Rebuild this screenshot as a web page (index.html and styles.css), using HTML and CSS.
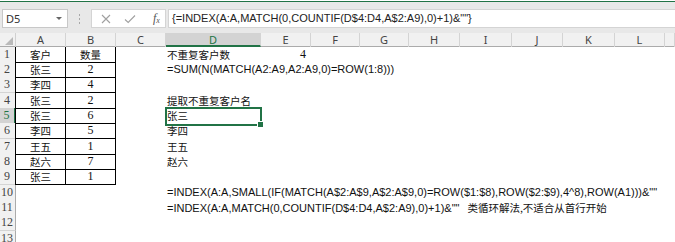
FILE: index.html
```html
<!DOCTYPE html>
<html lang="zh-CN">
<head>
<meta charset="utf-8">
<title>Excel</title>
<link rel="stylesheet" href="styles.css">
</head>
<body>
<div class="app">
  <div class="ribbon-edge"></div>
  <div class="fbar">
    <div class="namebox"><span class="nb-text">D5</span><span class="nb-arrow"></span></div>
    <div class="sep"><i></i><i></i><i></i></div>
    <div class="btns">
      <svg class="ico" width="10" height="10" viewBox="0 0 10 10"><path d="M1 1L9 9M9 1L1 9" stroke="#a0a0a0" stroke-width="1.1" fill="none"/></svg>
      <svg class="ico" width="12" height="10" viewBox="0 0 12 10"><path d="M1 5.5L4.2 8.5L11 1.5" stroke="#a0a0a0" stroke-width="1.1" fill="none"/></svg>
      <span class="fx">f<sub>x</sub></span>
    </div>
    <div class="finput">{=INDEX(A:A,MATCH(0,COUNTIF(D$4:D4,A$2:A9),0)+1)&amp;""}</div>
  </div>
  <div class="gap"></div>
  <div class="sheet">
    <div class="row hdr">
      <div class="corner"><span class="tri"></span></div>
      <div class="ch">A</div><div class="ch">B</div><div class="ch">C</div><div class="ch sel">D</div><div class="ch">E</div><div class="ch">F</div><div class="ch">G</div><div class="ch">H</div><div class="ch">I</div><div class="ch">J</div><div class="ch">K</div><div class="ch">L</div><div class="ch last"></div>
    </div>

    <div class="row r15">
      <div class="rh">1</div><div class="c t tl">客户</div><div class="c t">数量</div><div class="c"></div>
      <div class="c d cn">不重复客户数</div><div class="c num-r">4</div>
    </div>
    <div class="row r15">
      <div class="rh">2</div><div class="c t tl">张三</div><div class="c t n">2</div><div class="c"></div>
      <div class="c d fm">=SUM(N(MATCH(A2:A9,A2:A9,0)=ROW(1:8)))</div>
    </div>
    <div class="row r16">
      <div class="rh">3</div><div class="c t tl">李四</div><div class="c t n">4</div><div class="c"></div>
      <div class="c d"></div>
    </div>
    <div class="row r15">
      <div class="rh">4</div><div class="c t tl">张三</div><div class="c t n">2</div><div class="c"></div>
      <div class="c d cn">提取不重复客户名</div>
    </div>
    <div class="row r15">
      <div class="rh rsel">5</div><div class="c t tl">张三</div><div class="c t n">6</div><div class="c"></div>
      <div class="c d cn active">张三</div>
    </div>
    <div class="row r16">
      <div class="rh">6</div><div class="c t tl">李四</div><div class="c t n">5</div><div class="c"></div>
      <div class="c d cn">李四</div>
    </div>
    <div class="row r15">
      <div class="rh">7</div><div class="c t tl">王五</div><div class="c t n">1</div><div class="c"></div>
      <div class="c d cn">王五</div>
    </div>
    <div class="row r15">
      <div class="rh">8</div><div class="c t tl">赵六</div><div class="c t n">7</div><div class="c"></div>
      <div class="c d cn">赵六</div>
    </div>
    <div class="row r16">
      <div class="rh">9</div><div class="c t tl">张三</div><div class="c t n">1</div><div class="c"></div>
      <div class="c d"></div>
    </div>
    <div class="row r15">
      <div class="rh">10</div><div class="c"></div><div class="c"></div><div class="c"></div>
      <div class="c d fm">=INDEX(A:A,SMALL(IF(MATCH(A$2:A$9,A$2:A$9,0)=ROW($1:$8),ROW($2:$9),4^8),ROW(A1)))&amp;""</div>
    </div>
    <div class="row r15">
      <div class="rh">11</div><div class="c"></div><div class="c"></div><div class="c"></div>
      <div class="c d fm">=INDEX(A:A,MATCH(0,COUNTIF(D$4:D4,A$2:A9),0)+1)&amp;""<span class="note">类循环解法,不适合从首行开始</span></div>
    </div>
    <div class="row r16">
      <div class="rh">12</div>
    </div>
    <div class="row r15">
      <div class="rh">13</div>
    </div>
  </div>
</div>
</body>
</html>
```

FILE: styles.css
```css
html, body {
  margin: 0;
  padding: 0;
  background: #ffffff;
  overflow: hidden;
}

.app {
  width: 675px;
  height: 242px;
  overflow: hidden;
  font-family: "Noto Sans", "Noto Sans CJK SC", sans-serif;
}

.ribbon-edge {
  height: 1px;
  margin-top: 1px;
  background: #217346;
}

.fbar {
  display: flex;
  align-items: stretch;
  height: 19px;
  padding: 7px 0 0 2px;
  background: #e8e8e8;
}

.namebox {
  width: 66px;
  box-sizing: border-box;
  border: 1px solid #c8c8c8;
  background: #fff;
  display: flex;
  align-items: center;
  justify-content: space-between;
  padding: 0 5px 0 3px;
}

.nb-text {
  font-size: 11px;
  color: #333;
}

.nb-arrow {
  width: 0;
  height: 0;
  border-left: 3px solid transparent;
  border-right: 3px solid transparent;
  border-top: 3px solid #666;
}

.sep {
  width: 23px;
  display: flex;
  flex-direction: column;
  align-items: center;
  justify-content: center;
  gap: 2px;
}

.sep i {
  display: block;
  width: 1px;
  height: 2px;
  background: #a8a8a8;
}

.btns {
  width: 75px;
  box-sizing: border-box;
  border: 1px solid #d4d4d4;
  background: #fff;
  display: flex;
  align-items: center;
  padding-left: 9px;
  gap: 13px;
}

.fx {
  font-family: "Liberation Serif", serif;
  font-style: italic;
  font-size: 12px;
  color: #555;
  margin-left: 4px;
}

.fx sub {
  font-size: 8px;
  vertical-align: -1px;
}

.finput {
  flex: 1;
  margin-left: 2px;
  box-sizing: border-box;
  border: 1px solid #d4d4d4;
  border-right: none;
  background: #fff;
  font-family: "Liberation Sans", sans-serif;
  font-size: 11px;
  line-height: 17px;
  color: #222;
  padding-left: 3px;
  white-space: nowrap;
}

.gap {
  height: 5px;
  background: #e8e8e8;
}

.sheet {
  display: flex;
  flex-direction: column;
}

.row {
  display: grid;
  grid-template-columns: 16px 50px 50px 50px 95px 50px 49px 49px 51px 52px 51px 52px 50px 1fr;
}

.hdr {
  height: 14px;
  background: #f1f1f1;
  box-sizing: border-box;
  border-bottom: 1px solid #ababab;
}

.corner {
  position: relative;
  box-sizing: border-box;
  border-right: 1px solid #d0d0d0;
}

.tri {
  position: absolute;
  right: 2px;
  bottom: 2px;
  width: 0;
  height: 0;
  border-left: 8px solid transparent;
  border-bottom: 8px solid #b9b9b9;
}

.ch {
  box-sizing: border-box;
  border-right: 1px solid #d4d4d4;
  font-size: 11px;
  line-height: 13px;
  text-align: center;
  color: #444;
}

.ch.sel {
  background: #d3d3d3;
  color: #217346;
  border-bottom: 2px solid #217346;
  height: 14px;
}

.r15 { height: 15px; }
.r16 { height: 16px; }

.rh {
  background: #f1f1f1;
  box-sizing: border-box;
  border-right: 1px solid #ababab;
  border-bottom: 1px solid #d4d4d4;
  font-family: "Liberation Serif", serif;
  font-size: 12px;
  line-height: 15px;
  color: #444;
  text-align: center;
  padding-right: 1px;
}

.rsel {
  background: #d3d3d3;
  color: #217346;
  border-right: 2px solid #217346;
}

.c {
  box-sizing: border-box;
  font-size: 11px;
  line-height: 15px;
  white-space: nowrap;
  color: #111;
  min-width: 0;
}

.t {
  text-align: center;
  border-right: 1px solid #000;
  border-bottom: 1px solid #000;
  font-family: "Noto Sans CJK SC", sans-serif;
  font-size: 10.5px;
}

.tl {
  margin-left: -1px;
  border-left: 1px solid #000;
}

.t.n {
  font-family: "Liberation Serif", serif;
  font-size: 12px;
}

.d {
  overflow: visible;
  padding-left: 1px;
}

.cn {
  font-family: "Noto Sans CJK SC", sans-serif;
  font-size: 10.5px;
}

.fm {
  font-family: "Liberation Sans", sans-serif;
  font-size: 11px;
}

.note {
  font-family: "Noto Sans CJK SC", sans-serif;
  font-size: 10.5px;
  margin-left: 8px;
}

.num-r {
  text-align: right;
  padding-right: 5px;
  font-family: "Liberation Serif", serif;
  font-size: 12px;
}

.active {
  position: relative;
}

.active::after {
  content: "";
  position: absolute;
  left: -1px;
  top: -1px;
  right: -1px;
  bottom: -2px;
  border: 2px solid #217346;
}

.active::before {
  content: "";
  position: absolute;
  right: -3px;
  bottom: -4px;
  width: 5px;
  height: 5px;
  background: #217346;
  border: 1px solid #fff;
  z-index: 2;
}
```
